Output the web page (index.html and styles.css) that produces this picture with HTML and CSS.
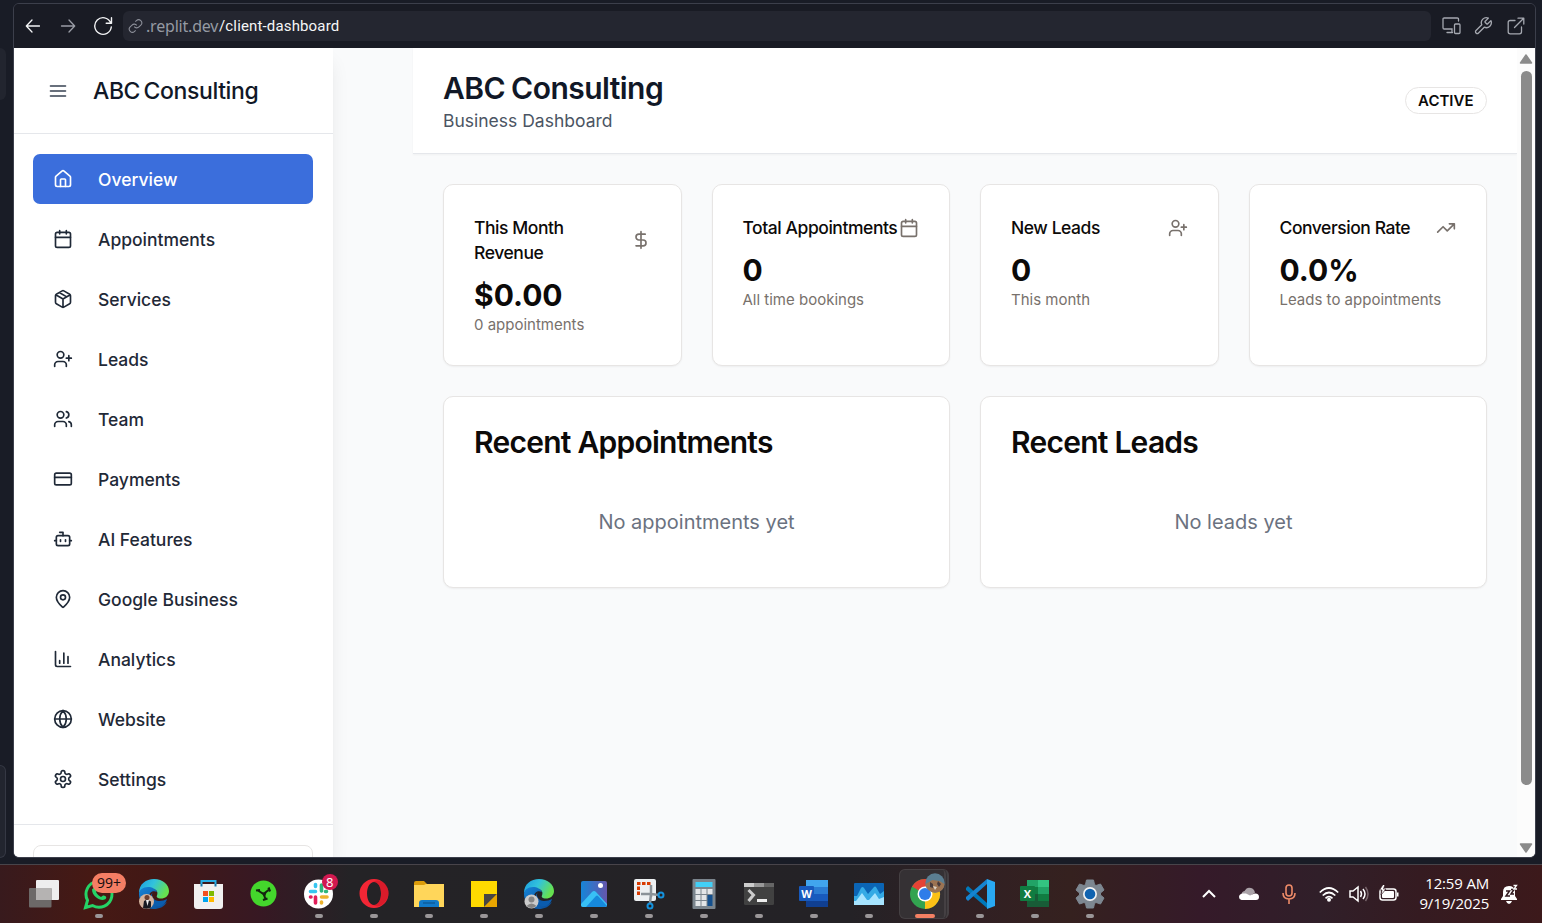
FILE: index.html
```html
<!DOCTYPE html>
<html lang="en">
<head>
<meta charset="utf-8">
<title>ABC Consulting</title>
<link rel="stylesheet" href="styles.css">
</head>
<body>
<svg class="defs" width="0" height="0">
  <symbol id="calendar" viewBox="0 0 24 24"><path d="M8 2v4M16 2v4M3 10h18"/><rect x="3" y="4" width="18" height="18" rx="2"/></symbol>
  <symbol id="user-plus" viewBox="0 0 24 24"><path d="M16 21v-2a4 4 0 0 0-4-4H6a4 4 0 0 0-4 4v2M19 8v6M22 11h-6"/><circle cx="9" cy="7" r="4"/></symbol>
  <linearGradient id="edgeA" x1="0" y1="0" x2="1" y2="0.4"><stop offset="0" stop-color="#1a9be0"/><stop offset="0.5" stop-color="#32c3dc"/><stop offset="1" stop-color="#66e150"/></linearGradient>
  <linearGradient id="edgeB" x1="0" y1="0" x2="1" y2="1"><stop offset="0" stop-color="#1583d6"/><stop offset="1" stop-color="#0a4a95"/></linearGradient>
  <symbol id="edge" viewBox="0 0 30 30"><path fill="url(#edgeA)" d="M0 14C0 5 7 0 15 0c9 0 15 6 15 12 0 5-4 7.500-8 7.500-3.500 0-5-1.500-4-3 1.500-4-1-6.500-4.500-6.500C8 10 2 11 0 14Z"/><path fill="url(#edgeB)" d="M0 15c0-4 4-7 9-7 4 0 8 2 9 5-5-2-8 1-8 5 0 5 5 8 10 8 3 0 6-1 8-3-3 5-8 7-13 7C6 30 0 23 0 15Z"/><path fill="#0b5cae" d="M14 13c-3 4 1 9 6 9 3 0 6-1 8-2-1 5-6 8-10 7-6-1-9-9-4-14Z"/></symbol>
</svg>

<div class="desktop">
  <div class="edge-strip"><div class="peek peek-top"></div><div class="peek peek-bottom"></div></div>
  <div class="window">
    <div class="toolbar">
      <svg class="tb back" width="16" height="16" viewBox="0 0 16 16"><path d="M14.500 8h-13M7 2L1.300 8 7 14"/></svg>
      <svg class="tb fwd" width="16" height="16" viewBox="0 0 16 16"><path d="M1.500 8h13M9 2l5.700 6L9 14"/></svg>
      <svg class="tb reload" width="20" height="20" viewBox="0 0 20 20"><path d="M17.600 6.500A8.300 8.300 0 1 0 18.300 11M18.500 1.800v5.400h-5.300"/></svg>
      <div class="address">
        <svg class="link" width="15" height="16" viewBox="0 0 24 24"><path d="M10 13a5 5 0 0 0 7.540.54l3-3a5 5 0 0 0-7.070-7.070l-1.720 1.710"/><path d="M14 11a5 5 0 0 0-7.540-.54l-3 3a5 5 0 0 0 7.070 7.070l1.710-1.710"/></svg>
        <span class="host">.replit.dev</span><span class="path">/client-dashboard</span>
      </div>
      <svg class="tb tool" width="19" height="18" viewBox="0 0 19 18"><path d="M16.500 4V2.200Q16.500 1 15.300 1H2.200Q1 1 1 2.200v8.600Q1 12 2.200 12h8M10 12v3.500M5 15.500h5.500"/><rect x="12.500" y="7" width="5.500" height="9.500" rx="1"/></svg>
      <svg class="tb tool" width="20" height="20" viewBox="0 0 24 24"><path d="M14.700 6.300a1 1 0 0 0 0 1.400l1.600 1.600a1 1 0 0 0 1.400 0l3.770-3.770a6 6 0 0 1-7.940 7.940l-6.910 6.910a2.120 2.120 0 0 1-3-3l6.910-6.910a6 6 0 0 1 7.940-7.940z"/></svg>
      <svg class="tb tool" width="18" height="18" viewBox="0 0 18 18"><path d="M8 3.500H3.200Q1.200 3.500 1.200 5.500v9.300q0 2 2 2h9.300q2 0 2-2V10M7.500 10.500L16.700 1.300M11 1.200h5.800V7"/></svg>
    </div>
    <div class="page">
      <aside class="sidebar">
        <div class="brand">
          <svg class="ico" width="20" height="20" viewBox="0 0 24 24"><path d="M3 6h18M3 12h18M3 18h18"/></svg>
          <span>ABC Consulting</span>
        </div>
        <nav class="nav">
          <a class="item active"><svg class="ico" width="20" height="20" viewBox="0 0 24 24"><path d="M15 21v-8a1 1 0 0 0-1-1h-4a1 1 0 0 0-1 1v8"/><path d="M3 10a2 2 0 0 1 .709-1.528l7-5.999a2 2 0 0 1 2.582 0l7 5.999A2 2 0 0 1 21 10v9a2 2 0 0 1-2 2H5a2 2 0 0 1-2-2z"/></svg><span>Overview</span></a>
          <a class="item"><svg class="ico" width="20" height="20"><use href="#calendar"/></svg><span>Appointments</span></a>
          <a class="item"><svg class="ico" width="20" height="20" viewBox="0 0 24 24"><path d="M11 21.730a2 2 0 0 0 2 0l7-4A2 2 0 0 0 21 16V8a2 2 0 0 0-1-1.730l-7-4a2 2 0 0 0-2 0l-7 4A2 2 0 0 0 3 8v8a2 2 0 0 0 1 1.730zM12 22V12M3.300 7l8.700 5 8.700-5M7.500 4.270l9 5.150"/></svg><span>Services</span></a>
          <a class="item"><svg class="ico" width="20" height="20"><use href="#user-plus"/></svg><span>Leads</span></a>
          <a class="item"><svg class="ico" width="20" height="20" viewBox="0 0 24 24"><path d="M16 21v-2a4 4 0 0 0-4-4H6a4 4 0 0 0-4 4v2"/><circle cx="9" cy="7" r="4"/><path d="M22 21v-2a4 4 0 0 0-3-3.870M16 3.130a4 4 0 0 1 0 7.750"/></svg><span>Team</span></a>
          <a class="item"><svg class="ico" width="20" height="20" viewBox="0 0 24 24"><rect x="2" y="5" width="20" height="14" rx="2"/><path d="M2 10h20"/></svg><span>Payments</span></a>
          <a class="item"><svg class="ico" width="20" height="20" viewBox="0 0 24 24"><path d="M12 8V4H8M2 14h2M20 14h2M15 13v2M9 13v2"/><rect x="4" y="8" width="16" height="12" rx="2"/></svg><span>AI Features</span></a>
          <a class="item"><svg class="ico" width="20" height="20" viewBox="0 0 24 24"><path d="M20 10c0 4.993-5.539 10.193-7.399 11.799a1 1 0 0 1-1.202 0C9.539 20.193 4 14.993 4 10a8 8 0 0 1 16 0"/><circle cx="12" cy="10" r="3"/></svg><span>Google Business</span></a>
          <a class="item"><svg class="ico" width="20" height="20" viewBox="0 0 24 24"><path d="M3 3v16a2 2 0 0 0 2 2h16M18 17V9M13 17V5M8 17v-3"/></svg><span>Analytics</span></a>
          <a class="item"><svg class="ico" width="20" height="20" viewBox="0 0 24 24"><circle cx="12" cy="12" r="10"/><path d="M12 2a14.500 14.500 0 0 0 0 20 14.500 14.500 0 0 0 0-20M2 12h20"/></svg><span>Website</span></a>
          <a class="item"><svg class="ico" width="20" height="20" viewBox="0 0 24 24"><path d="M12.220 2h-.44a2 2 0 0 0-2 2v.18a2 2 0 0 1-1 1.730l-.43.25a2 2 0 0 1-2 0l-.15-.08a2 2 0 0 0-2.730.73l-.22.38a2 2 0 0 0 .73 2.730l.15.1a2 2 0 0 1 1 1.720v.51a2 2 0 0 1-1 1.740l-.15.09a2 2 0 0 0-.73 2.730l.22.38a2 2 0 0 0 2.730.73l.15-.08a2 2 0 0 1 2 0l.43.25a2 2 0 0 1 1 1.730V20a2 2 0 0 0 2 2h.44a2 2 0 0 0 2-2v-.18a2 2 0 0 1 1-1.730l.43-.25a2 2 0 0 1 2 0l.15.08a2 2 0 0 0 2.730-.73l.22-.39a2 2 0 0 0-.73-2.730l-.15-.08a2 2 0 0 1-1-1.740v-.5a2 2 0 0 1 1-1.740l.15-.09a2 2 0 0 0 .73-2.730l-.22-.38a2 2 0 0 0-2.730-.73l-.15.08a2 2 0 0 1-2 0l-.43-.25a2 2 0 0 1-1-1.730V4a2 2 0 0 0-2-2z"/><circle cx="12" cy="12" r="3"/></svg><span>Settings</span></a>
        </nav>
        <div class="side-foot"><div class="foot-button"></div></div>
      </aside>
      <main class="main">
        <header class="head">
          <div><h1>ABC Consulting</h1><p>Business Dashboard</p></div>
          <span class="badge">ACTIVE</span>
        </header>
        <div class="content">
          <section class="stats">
            <article class="card"><div class="card-top"><h3>This Month Revenue</h3><svg class="ico" width="20" height="20" viewBox="0 0 24 24"><path d="M12 2v20M17 5H9.500a3.500 3.500 0 0 0 0 7h5a3.500 3.500 0 0 1 0 7H6"/></svg></div><div class="value">$0.00</div><p>0 appointments</p></article>
            <article class="card"><div class="card-top"><h3 class="nowrap">Total Appointments</h3><svg class="ico" width="20" height="20"><use href="#calendar"/></svg></div><div class="value">0</div><p>All time bookings</p></article>
            <article class="card"><div class="card-top"><h3>New Leads</h3><svg class="ico" width="20" height="20"><use href="#user-plus"/></svg></div><div class="value">0</div><p>This month</p></article>
            <article class="card"><div class="card-top"><h3>Conversion Rate</h3><svg class="ico" width="20" height="20" viewBox="0 0 24 24"><path d="M22 7l-8.500 8.500-5-5L2 17M16 7h6v6"/></svg></div><div class="value">0.0%</div><p>Leads to appointments</p></article>
          </section>
          <section class="recent">
            <article class="card"><h2>Recent Appointments</h2><p class="empty">No appointments yet</p></article>
            <article class="card"><h2>Recent Leads</h2><p class="empty">No leads yet</p></article>
          </section>
        </div>
      </main>
      <div class="scrollbar">
        <svg width="14" height="10" viewBox="0 0 14 10"><path d="M7 1L12.500 9h-11z"/></svg>
        <div class="thumb"></div>
        <svg class="down" width="14" height="10" viewBox="0 0 14 10"><path d="M7 9L12.500 1h-11z"/></svg>
      </div>
    </div>
  </div>
</div>

<footer class="taskbar">
  <div class="apps">
    <div class="app"><svg width="36" height="40"><rect x="10" y="6" width="23" height="20" rx="1" fill="#eeeeee"/><rect x="3" y="14" width="22.500" height="19.500" rx="1" fill="#6c6968"/><path d="M10 14h15.500v12H10z" fill="#b5b3b2"/></svg></div>
    <div class="app run"><svg width="36" height="40"><path d="M4.500 33.500l2-7.200A13 13 0 1 1 11.500 31.500z" fill="none" stroke="#25d366" stroke-width="3"/><path d="M13 13.500c2-1 3 1 3 3l-1 1.500c1 2 3 4 5 5l2-1.500c2 0 4 1 3 3-3 4-14-1-14-9z" fill="#25d366"/></svg><span class="count">99+</span></div>
    <div class="app"><svg width="36" height="40"><use href="#edge" x="3" y="5" width="30" height="30"/><circle cx="10.500" cy="27.500" r="7.500" fill="#d4b49f"/><circle cx="11" cy="23.500" r="2.500" fill="#6c3f30"/><path d="M7 34l1-7 3-1.500 4 2v6q-4 2-8 .5z" fill="#171a22"/><path d="M10 26h3l-1.500 6z" fill="#eee"/></svg></div>
    <div class="app"><svg width="36" height="40"><path d="M10.500 12V7h14v5" fill="none" stroke="#28aee6" stroke-width="2"/><path d="M3 10h29v22q0 3-3 3H6q-3 0-3-3z" fill="#f0f0f0"/><path d="M12 17h5v5h-5z" fill="#f25022"/><path d="M18 17h5v5h-5z" fill="#7fba00"/><path d="M12 23h5v5h-5z" fill="#00a4ef"/><path d="M18 23h5v5h-5z" fill="#ffb900"/><path d="M10.500 10v2.500M24.500 10v2.500" stroke="#1479ae" stroke-width="2"/></svg></div>
    <div class="app"><svg width="36" height="40"><circle cx="17.500" cy="19.500" r="13" fill="#44d62c"/><path d="M12 16.500l5.500 3.500 5-4M17.500 20l2 5" fill="none" stroke="#14240f" stroke-width="2"/><path d="M15 18.500h5.500L19 23z" fill="#14240f"/><path d="M10 16.500l4-.5M22.500 13.500l1.500 4M17 26l4.500-1.500" stroke="#14240f" stroke-width="2.200"/></svg></div>
    <div class="app run"><svg width="36" height="40"><circle cx="17.500" cy="20" r="14.500" fill="#fff"/><g stroke-width="3.600" stroke-linecap="round"><path d="M9.500 17.500h5M14.500 10.500v2" stroke="#36c5f0"/><path d="M20.500 11v6M25.500 17.500h-1" stroke="#2eb67d"/><path d="M20.500 23h5.500M20.500 28v1" stroke="#ecb22e"/><path d="M14.500 23v6M9.500 23h.5" stroke="#e01e5a"/></g></svg><span class="count small">8</span></div>
    <div class="app run"><svg width="36" height="40"><path fill-rule="evenodd" fill="#f32635" d="M18 5a14.500 14.500 0 1 0 0 29 14.500 14.500 0 0 0 0-29zm0 3c4 0 7 5 7 11.500S22 31 18 31s-7-5-7-11.500S14 8 18 8z"/><path fill="#b40c1b" d="M17 8c8-5 16 3 15.500 11.500C32 28 24 35 17 31c5 0 8-5 8-11.500S22 8 17 8z" opacity=".4"/></svg></div>
    <div class="app run"><svg width="36" height="40"><path d="M3 9q0-2 2-2h8l3 3v6H3z" fill="#dc9c09"/><path d="M3 11h10l2-1h18v23H3z" fill="#ffd65a"/><path d="M8 33v-4q0-3 3-3h14q3 0 3 3v4z" fill="#127ac9"/><path d="M12 29h12" stroke="#0b4f85"/></svg></div>
    <div class="app run"><svg width="36" height="40"><path d="M5 7h26v13L18 33H5z" fill="#ffda00"/><path d="M18 33V20h13z" fill="#484642"/><path d="M18 33l13-13v13z" fill="#e8a500"/></svg></div>
    <div class="app run"><svg width="36" height="40"><use href="#edge" x="3" y="5" width="30" height="30"/><circle cx="10.500" cy="27.500" r="7" fill="#cbcbcb"/><circle cx="10.500" cy="25.500" r="3" fill="#848484"/><path d="M5.500 32q5-5 10 0-5 4-10 0z" fill="#848484"/></svg></div>
    <div class="app run"><svg width="36" height="40"><defs><linearGradient id="ph" x2="1"><stop stop-color="#1685d8"/><stop offset="1" stop-color="#6556ad"/></linearGradient></defs><rect x="5" y="7" width="26" height="26" rx="2" fill="url(#ph)"/><path d="M5 30l11-12q2-2 4 0l11 12v1q0 2-2 2H7q-2 0-2-2z" fill="#38c0f5"/><path d="M10 33l10-11q1-1 2 0l9 10-2 1z" fill="#1689dc"/><circle cx="24.500" cy="11.500" r="2.500" fill="#fff"/></svg></div>
    <div class="app run"><svg width="36" height="40"><rect x="3" y="5" width="22" height="22" rx="2" fill="#edf0f2"/><path d="M7.500 21V9.500H20" fill="none" stroke="#d83b01" stroke-width="3" stroke-dasharray="3.500 1.500"/><path d="M20 11v12M10 20h10M20 20l8 1M20 20l-1 9" stroke="#8b9298" stroke-width="2.500"/><g fill="none" stroke="#1492dd" stroke-width="2"><circle cx="30" cy="21" r="2.500"/><circle cx="19" cy="32" r="2.500"/></g></svg></div>
    <div class="app run"><svg width="36" height="40"><rect x="6.500" y="5" width="23" height="30" rx="1" fill="#7b858d"/><path d="M9.500 8h17v5h-17z" fill="#42cff6"/><path d="M9.500 15h5v5h-5zM15.500 15h5v5h-5zM21.500 15h5v5h-5zM9.500 21h5v5h-5zM15.500 21h5v5h-5zM9.500 27h5v5h-5zM15.500 27h5v5h-5z" fill="#e3e6e8"/><path d="M21.500 21h5v11h-5z" fill="#15508d"/></svg></div>
    <div class="app run"><svg width="36" height="40"><rect x="3" y="9" width="30" height="22" rx="1.500" fill="#414141"/><path d="M3 9h10v4H3z" fill="#ccc"/><path d="M13 9h10v4H13z" fill="#999"/><path d="M23 9h10v4H23z" fill="#666"/><path d="M7.500 16l5 5-5 6" fill="none" stroke="#ccc" stroke-width="3"/><path d="M16 26.500h10" stroke="#eee" stroke-width="3"/></svg></div>
    <div class="app run"><svg width="36" height="40"><path d="M10 6h22v7H10z" fill="#41a5ee"/><path d="M10 13h22v7H10z" fill="#2b7cd3"/><path d="M10 20h22v7H10z" fill="#185abd"/><path d="M10 27h22v6H10z" fill="#103f91"/><rect x="3" y="12" width="15" height="15" rx="1" fill="#185abd"/><text x="10.500" y="23.500" class="glyph" text-anchor="middle">W</text></svg></div>
    <div class="app run"><svg width="36" height="40"><rect x="3" y="9" width="30" height="22" rx="1" fill="#0b65b5"/><path d="M3 22h3l4-8q1.500-2 3 0l4 6 6-7q1-1 2 0l4 7 4-3v14H3z" fill="#34aae5"/><path d="M3 27h2l6-8 5 7h2l6-7 4 6 5-2v8H3z" fill="#a7e4ff"/></svg></div>
    <div class="app run selected"><svg width="36" height="40"><circle cx="18" cy="20" r="15" fill="#32a350"/><path d="M18 20L5 12.500A15 15 0 0 1 31 12.500z" fill="#e54335"/><path d="M18 20V12.500H31A15 15 0 0 1 18 35z" fill="#fbc116"/><circle cx="18" cy="20" r="7.500" fill="#fff"/><circle cx="18" cy="20" r="6" fill="#2f7de9"/></svg><svg class="avatar" width="20" height="20"><circle cx="10" cy="10" r="9.700" fill="#5b7f92"/><path d="M.5 11l7-4 7 1 5 3q-1 8.500-9.500 8.500-8-.5-9.500-8.500z" fill="#9b7352"/><path d="M5 9l3 2v4l-3-1zM13 8l3 3-2 3-2-3z" fill="#473b3d"/><path d="M8 13l4 1-2 3z" fill="#ddd2c4"/></svg></div>
    <div class="app run"><svg width="36" height="40"><path d="M4 14l2-2 19 17v5L4 16z" fill="#0078b9"/><path d="M4 25l2 2 19-17V5L4 23z" fill="#1684d0"/><path d="M25 5l8 3v24l-8 3z" fill="#29a9f2"/></svg></div>
    <div class="app run"><svg width="36" height="40"><path d="M10 6h11v7H10z" fill="#21a366"/><path d="M21 6h11v7H21z" fill="#33c481"/><path d="M10 13h11v7H10z" fill="#107c41"/><path d="M21 13h11v7H21z" fill="#21a366"/><path d="M10 20h22v13H10z" fill="#185c37"/><path d="M21 20h11v7H21z" fill="#107c41"/><rect x="3" y="12" width="15" height="15" rx="1" fill="#107c41"/><text x="10.500" y="23.500" class="glyph" text-anchor="middle">X</text></svg></div>
    <div class="app run"><svg width="36" height="40"><path d="M13.500 10.500L14.500 6h7l1 4.500 1.500 1 4.500-1.500 3.500 6-3.500 3v2l3.500 3-3.500 6-4.500-1.500-1.500 1-1 4.500h-7l-1-4.500-1.500-1L7.500 30 4 24l3.500-3v-2L4 16l3.500-6 4.500 1.500z" fill="#7d8791" stroke="#7d8791" stroke-linejoin="round"/><circle cx="18" cy="20" r="7" fill="#f1f2f3"/><circle cx="18" cy="20" r="5.300" fill="#1063b0"/></svg></div>
  </div>
  <div class="tray">
    <svg class="t-chev" width="14" height="10" viewBox="0 0 14 10"><path d="M1 8l6-6 6 6" fill="none" stroke="#fff" stroke-width="2"/></svg>
    <svg class="t-cloud" width="20" height="14" viewBox="0 0 20 14"><path d="M2.500 8q0-3.500 3-4Q8-.5 12 1q3 .5 4 4.500L9 11z" fill="#aaa2a8"/><path d="M2.500 13Q0 12.500 0 10q0-3 3.500-3.500H7l4 2 4.500-2Q20 6 20 10q0 3-3 3z" fill="#fff"/></svg>
    <svg class="t-mic" width="14" height="20" viewBox="0 0 14 20"><g fill="none" stroke="#ee8b68" stroke-width="1.600"><rect x="4" y="1" width="6" height="11" rx="3"/><path d="M1 9q0 6 6 6t6-6M7 15v5"/></g></svg>
    <svg class="t-wifi" width="20" height="16" viewBox="0 0 20 16"><g fill="none" stroke="#fff" stroke-width="1.700"><path d="M.8 6.500q9-9 18.400 0M3.700 9.500q6.300-6 12.600 0M6.500 12.300q3.500-3.300 7 0"/></g><circle cx="10" cy="13.700" r="2" fill="#fff"/></svg>
    <svg class="t-vol" width="20" height="18" viewBox="0 0 20 18"><g fill="none" stroke="#fff" stroke-width="1.500"><path d="M1 6h3l5-4v14l-5-4H1zM11.500 6q2 3 0 6M14 4q4 5 0 10"/><path d="M16.500 2q5 7 0 14" stroke="#77646a"/></g></svg>
    <svg class="t-bat" width="20" height="18" viewBox="0 0 20 18"><rect x="1" y="4" width="16" height="11" rx="2.500" fill="none" stroke="#fff" stroke-width="1.500"/><rect x="3" y="6" width="12" height="7" rx="1" fill="#fff"/><path d="M18 7.500h1.500v4H18z" fill="#fff"/><path d="M4-.5L.5 5H3l-1 5 5-6H4.500L6-.5z" fill="#fff" stroke="#32191f" stroke-width=".7"/></svg>
    <div class="clock"><span>12:59 AM</span><span>9/19/2025</span></div>
    <svg class="t-bell" width="18" height="20" viewBox="0 0 18 20"><path d="M1 15l2-3V8q0-6 6-6 5 0 6 5v5l2 3v1H1z" fill="#fff"/><path d="M6 17h6q-1 3-3 3t-3-3z" fill="#fff"/><path d="M6 7h3.500L6 12h4M11 5.500h3L11 10h3" fill="none" stroke="#32191f" stroke-width="1.500"/><path d="M13.500 1.500h3L14 5h3" fill="none" stroke="#fff" stroke-width="1.300"/></svg>
  </div>
</footer>
</body>
</html>
```
FILE: styles.css
```css
*, *::before, *::after { box-sizing: border-box; }
body { margin: 0; width: 1542px; height: 923px; overflow: hidden; display: flex; flex-direction: column; background: #181b24; font-family: Inter, "Liberation Sans", sans-serif; }
h1, h2, h3, p { margin: 0; font-weight: 400; }
svg { display: block; flex: none; }
.defs { position: absolute; }

.desktop { height: 864px; display: flex; padding-right: 6px; background: #191c26; }
.edge-strip { width: 13px; padding-top: 48px; }
.peek { width: 6px; background: #22252f; }
.peek-top { height: 52px; border-radius: 0 8px 8px 0; }
.peek-bottom { height: 93px; margin-top: 665px; border: 1px solid #353844; border-left: 0; border-radius: 0 8px 8px 0; }

.window { flex: 1; height: 855px; margin-top: 3px; border: 1px solid #3c3f4b; border-radius: 6px; overflow: hidden; display: flex; flex-direction: column; }
.toolbar { height: 44px; flex: none; display: flex; align-items: center; padding: 0 10px 0 11px; background: #191b24; }
.tb { fill: none; stroke: #f2f3f5; stroke-width: 1.3; stroke-linecap: round; stroke-linejoin: round; }
.fwd { stroke: #9a9da6; margin-left: 19px; }
.reload { margin-left: 17px; stroke-width: 1.4; }
.address { flex: 1; height: 30px; margin: 0 11px 0 10px; padding-left: 5px; display: flex; align-items: center; border-radius: 6px; background: #242630; font-family: "Noto Sans", sans-serif; }
.link { fill: none; stroke: #8c8f99; stroke-width: 1.7; margin-right: 3px; }
.host { width: 73px; font-size: 16px; color: #959aa3; white-space: nowrap; letter-spacing: -0.2px; }
.path { font-size: 15px; color: #f5f6f7; font-family: Roboto, sans-serif; letter-spacing: 0.15px; }
.tool { stroke: #a5a8b0; margin-right: 12px; }
.tool + .tool { stroke-width: 1.6; margin-right: 14px; }
.tool + .tool + .tool { stroke-width: 1.3; margin-right: 0; }

.page { flex: 1; min-height: 0; display: flex; background: #f9fafb; }
.sidebar { width: 319px; flex: none; background: #fff; box-shadow: 0 12px 19px -4px rgba(0,0,0,.1), 0 5px 7px -5px rgba(0,0,0,.1); color: #1f2937; }
.brand { height: 86px; display: flex; align-items: center; gap: 25px; padding-left: 34px; border-bottom: 1px solid #e5e7eb; font-size: 23px; font-weight: 500; letter-spacing: -0.4px; word-spacing: -2.2px; color: #111827; }
.brand .ico { color: #374151; }
.ico { fill: none; stroke: currentColor; stroke-width: 2; stroke-linecap: round; stroke-linejoin: round; }
.nav { display: flex; flex-direction: column; gap: 10px; padding: 20px 20px 20px 19px; }
.item { height: 50px; display: flex; align-items: center; gap: 25px; padding: 0 20px; border-radius: 7px; font-size: 17.5px; font-weight: 500; }
.active { background: #3b6edc; color: #fff; }
.side-foot { border-top: 1px solid #e5e7eb; padding: 20px 20px 0 19px; }
.foot-button { height: 45px; border: 1px solid #e7e5e4; border-radius: 8px; }

.main { flex: 1; padding-left: 80px; }
.head { height: 106px; display: flex; align-items: center; justify-content: space-between; padding: 0 30px; background: #fff; border-bottom: 1px solid #e5e7eb; box-shadow: 0 1px 2px rgba(0,0,0,.04); }
.head h1 { font-size: 30px; line-height: 39px; font-weight: 600; letter-spacing: -0.54px; word-spacing: -1px; color: #111827; }
.head p { font-size: 17.5px; line-height: 25px; color: #4b5563; }
.badge { height: 27px; padding: 0 12.5px; border: 1px solid #e7e5e4; border-radius: 14px; font-size: 15px; line-height: 25px; font-weight: 600; color: #0c0a09; }
.content { padding: 30px; display: grid; gap: 30px; }
.stats { display: grid; grid-template-columns: repeat(4, 1fr); gap: 30px; }
.recent { display: grid; grid-template-columns: 1fr 1fr; gap: 30px; }
.card { min-width: 0; padding: 30px; border: 1px solid #e7e5e4; border-radius: 10px; background: #fff; box-shadow: 0 1px 2px rgba(0,0,0,.05); color: #0c0a09; }
.card-top { display: flex; align-items: center; justify-content: space-between; padding-bottom: 10px; }
.card-top .ico { color: #78716c; }
.card-top h3 { font-size: 17.5px; line-height: 25px; font-weight: 500; letter-spacing: -0.44px; }
.nowrap { white-space: nowrap; }
.value { font-size: 30px; line-height: 40px; font-weight: 700; }
.stats p { font-size: 15px; line-height: 20px; color: #78716c; }
.recent h2 { font-size: 30px; line-height: 30px; font-weight: 600; letter-spacing: -0.75px; }
.empty { padding: 50px 0 20px; font-size: 20px; line-height: 30px; text-align: center; color: #6b7280; }

.scrollbar { width: 18px; flex: none; display: flex; flex-direction: column; align-items: center; padding: 6px 0 4px; background: #fcfcfc; }
.scrollbar svg { fill: #8b8b8b; stroke: #8b8b8b; stroke-width: 1.5; stroke-linejoin: round; }
.thumb { width: 11px; height: 714px; margin-top: 7px; border-radius: 6px; background: #8b8b8b; }
.down { margin-top: auto; }

.taskbar { height: 59px; display: flex; border-top: 1px solid #48444a; background: linear-gradient(90deg, #381a1d 0, #461914 90px, #421815 150px, #371823 260px, #242326 350px, #242226 850px, #302024 960px, #35211f 1070px, #351a29 1200px, #301f29 1320px, #351b21 1420px, #3c191b 1542px); }
.apps { display: flex; padding-left: 16.5px; }
.app { position: relative; width: 55.04px; display: flex; flex-direction: column; align-items: center; padding-top: 9px; }
.run::after { content: ""; width: 8px; height: 4px; border-radius: 2px; background: #9a9698; }
.selected::before { content: ""; position: absolute; left: 2px; top: 4px; width: 50px; height: 50px; border: 1px solid #454043; border-right: 5px double #454043; border-radius: 6px; background: #353134; }
.selected svg { position: relative; }
.selected::after { position: relative; width: 20px; background: #f38063; }
.selected .avatar { position: absolute; left: 28px; top: 8px; }
.count { position: absolute; left: 20.5px; top: 8px; width: 34px; height: 20px; border-radius: 10px; background: #f47e64; font: 14px/20px "Noto Sans", sans-serif; text-align: center; color: #1d1010; }
.small { left: 30px; top: 9px; width: 16px; height: 16px; background: #d31950; line-height: 16px; font-size: 13px; color: #fff; }
.glyph { font: 700 11px "Open Sans", sans-serif; fill: #fff; }
.tray { flex: 1; display: flex; align-items: center; padding-left: 85px; }
.t-cloud { margin-left: 23px; }
.t-mic { margin-left: 23px; }
.t-wifi { margin-left: 23px; }
.t-vol { margin-left: 10px; }
.t-bat { margin-left: 10px; }
.clock { width: 90px; flex: none; display: flex; flex-direction: column; align-items: flex-end; padding-bottom: 2px; font: 15px/20px "Open Sans", sans-serif; letter-spacing: -0.15px; color: #fff; white-space: nowrap; }
.t-bell { margin-left: 11px; }
```
